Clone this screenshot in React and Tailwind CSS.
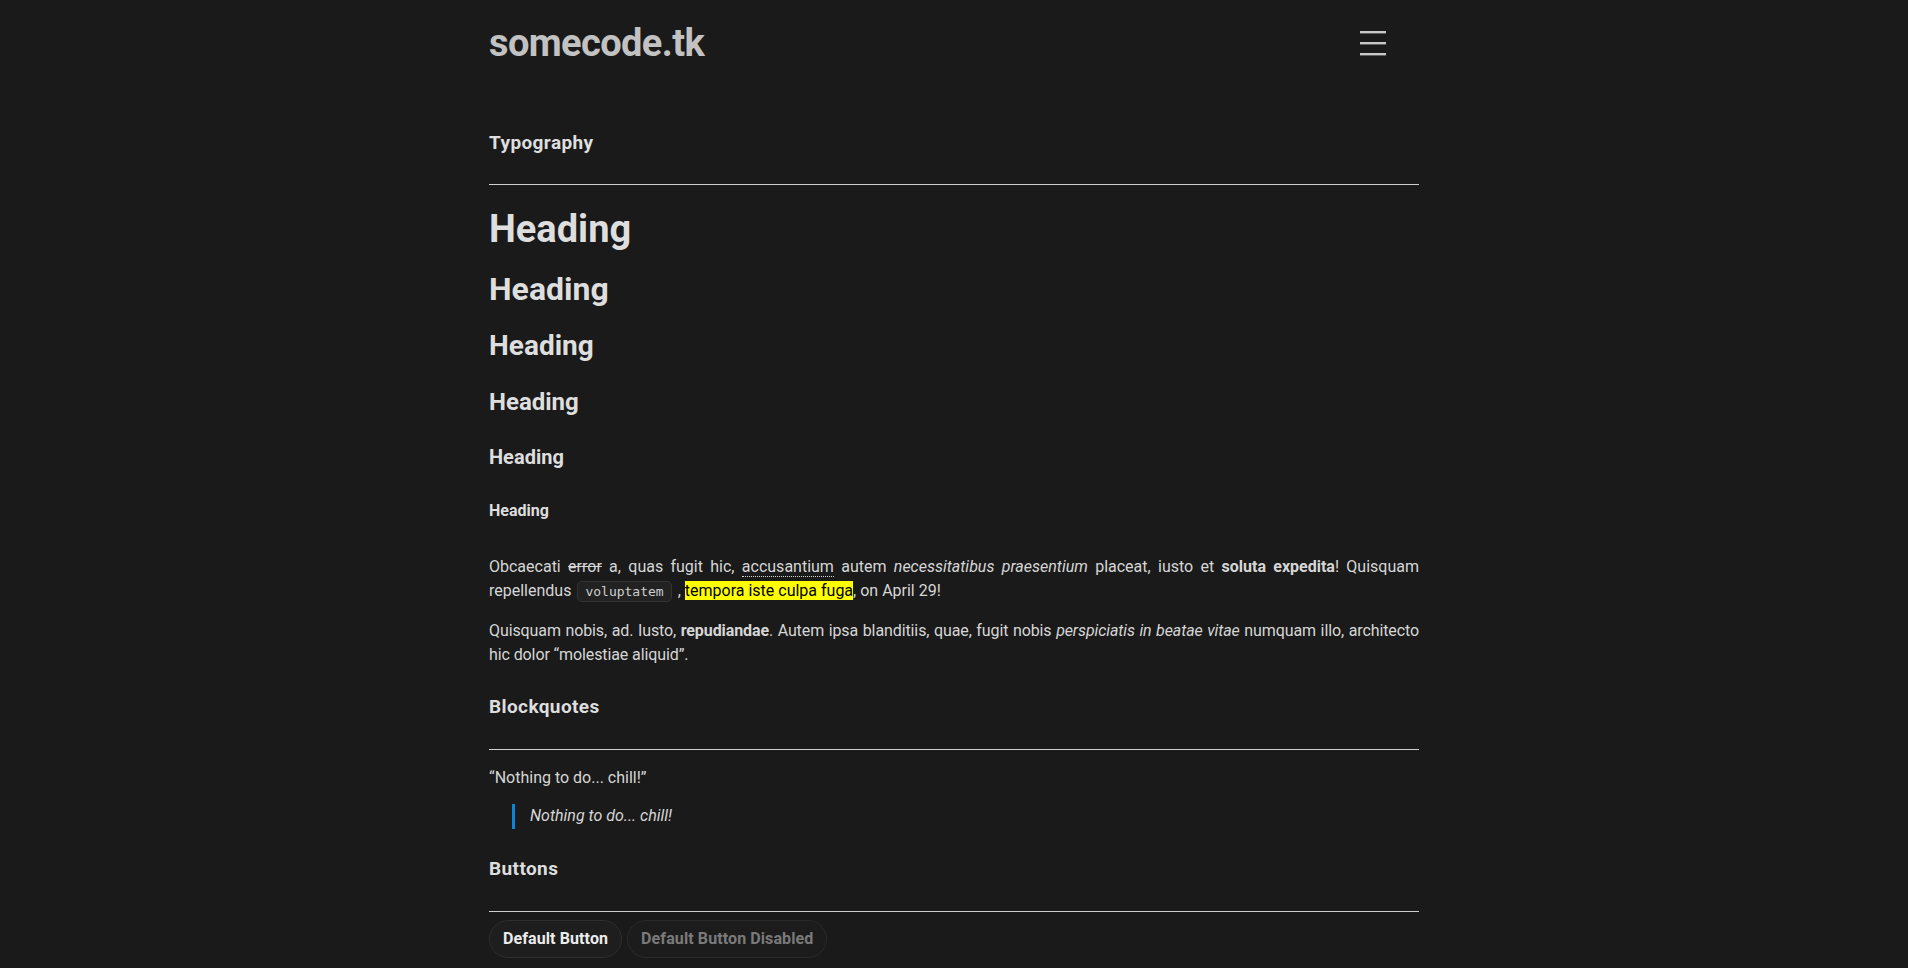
import React from 'react';

export default function App() {
  return (
    <div className="min-h-screen bg-[#1a1a1a] text-[#d6d6d6] font-['Roboto',sans-serif]">
      <div className="w-[930px] mx-auto pb-10">
        {/* Header */}
        <header className="flex items-center justify-between pt-[19px]">
          <a className="text-[38px] leading-[48px] font-bold text-[#c2c2c2] tracking-[-0.6px]">somecode.tk</a>
          <button className="mr-[33px] text-[#c8c8c8]" aria-label="menu">
            <svg width="26" height="26" viewBox="0 0 26 26" fill="currentColor">
              <rect x="0" y="1" width="26" height="2.4" />
              <rect x="0" y="12" width="26" height="2.4" />
              <rect x="0" y="23" width="26" height="2.4" />
            </svg>
          </button>
        </header>

        {/* Typography */}
        <h2 className="mt-[64px] text-[19px] leading-[24px] font-bold tracking-[0.4px] text-[#dedede]">Typography</h2>
        <hr className="mt-[29px] border-0 h-px bg-[#d0d0d0]" />

        <h1 className="mt-[21px] text-[38px] leading-[46px] font-bold text-[#dedede]">Heading</h1>
        <h2 className="mt-[18px] text-[32px] leading-[38px] font-bold text-[#dedede]">Heading</h2>
        <h3 className="mt-[21px] text-[28px] leading-[34px] font-bold text-[#dedede]">Heading</h3>
        <h4 className="mt-[25px] text-[24px] leading-[29px] font-bold text-[#dedede]">Heading</h4>
        <h5 className="mt-[28px] text-[20px] leading-[24px] font-bold text-[#dedede]">Heading</h5>
        <h6 className="mt-[32px] text-[16px] leading-[19px] font-bold text-[#dedede]">Heading</h6>

        <p className="mt-[35px] text-[16px] leading-[24px] text-justify">
          Obcaecati <del>error</del> a, quas fugit hic,{' '}
          <abbr title="accusantium" className="no-underline border-b border-dotted border-[#d6d6d6]">accusantium</abbr>{' '}
          autem <em>necessitatibus praesentium</em> placeat, iusto et <strong>soluta expedita</strong>! Quisquam repellendus{' '}
          <code className="mx-[2px] px-[7px] py-[2px] rounded-[5px] bg-[#222222] border border-[#333333] text-[13px] text-[#cfcfcf] font-['DejaVu_Sans_Mono',monospace]">voluptatem</code>{' '}
          , <mark className="bg-[#ffff00] text-black">tempora iste culpa fuga</mark>, on April 29!
        </p>
        <p className="mt-[15px] text-[16px] leading-[24px] text-justify tracking-[-0.1px]">
          Quisquam nobis, ad. Iusto, <strong>repudiandae</strong>. Autem ipsa blanditiis, quae, fugit nobis{' '}
          <em>perspiciatis in beatae vitae</em> numquam illo, architecto hic dolor “molestiae aliquid”.
        </p>

        {/* Blockquotes */}
        <h2 className="mt-[28px] text-[19px] leading-[24px] font-bold tracking-[0.4px] text-[#dedede]">Blockquotes</h2>
        <hr className="mt-[30px] border-0 h-px bg-[#d0d0d0]" />
        <p className="mt-[16px] text-[16px] leading-[24px]">“Nothing to do... chill!”</p>
        <blockquote className="mt-[14px] ml-[23px] border-l-[3px] border-[#0a84d8] pl-[15px] h-[25px] text-[16px] leading-[24px] italic">
          Nothing to do... chill!
        </blockquote>

        {/* Buttons */}
        <h2 className="mt-[28px] text-[19px] leading-[24px] font-bold tracking-[0.4px] text-[#dedede]">Buttons</h2>
        <hr className="mt-[30px] border-0 h-px bg-[#d0d0d0]" />
        <div className="mt-[8px] flex gap-[5px]">
          <button className="h-[38px] px-[13px] rounded-full bg-[#1e1e1e] border border-[#2e2e2e] text-[16px] font-bold tracking-[0.1px] text-[#ececec]">
            Default Button
          </button>
          <button disabled className="h-[38px] px-[13px] rounded-full bg-[#1c1c1c] border border-[#2a2a2a] text-[16px] font-bold tracking-[0.1px] text-[#7a7a7a]">
            Default Button Disabled
          </button>
        </div>
      </div>
    </div>
  );
}
